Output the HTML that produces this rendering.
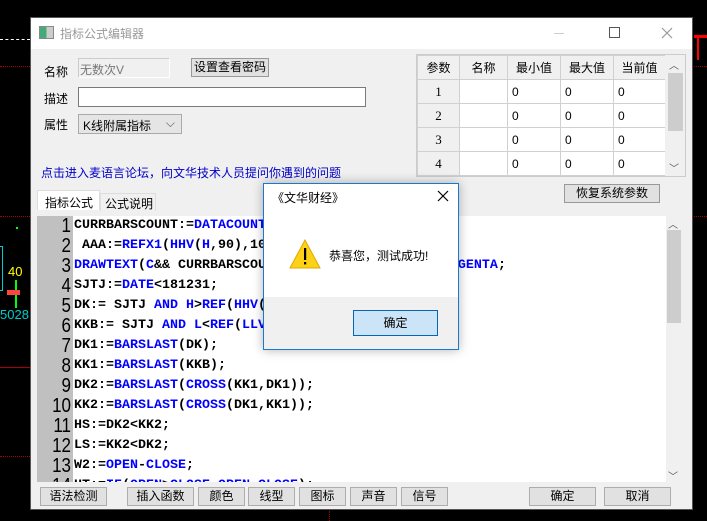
<!DOCTYPE html>
<html><head><meta charset="utf-8"><style>
*{margin:0;padding:0;box-sizing:border-box}
body{width:707px;height:521px;background:#000;position:relative;overflow:hidden;font-family:"Liberation Sans","Noto Sans CJK SC",sans-serif;font-size:12px;color:#000}
.a{position:absolute}
.win{left:30px;top:17px;width:663px;height:493px;background:#f0f0f0;border:1px solid #555}
.title{left:0;top:0;width:661px;height:31px;background:#fff}
.btn{position:absolute;background:#e1e1e1;border:1px solid #adadad;text-align:center;font-size:12px;line-height:17px;white-space:nowrap;overflow:hidden}
.code{left:6px;top:198px;width:629px;height:266px;background:#fff;overflow:hidden}
.gut{left:0;top:0;width:36px;height:266px;background:#c0c0c0}
.ln{position:absolute;left:0;width:34px;text-align:right;font-size:20px;font-family:"Liberation Sans",sans-serif;line-height:20px;transform:scaleX(.85);transform-origin:right}
.cl{position:absolute;left:37px;font-family:"Liberation Mono",monospace;font-weight:bold;font-size:13.33px;line-height:20px;white-space:pre}
.b{color:#0000ff}
table{border-collapse:collapse;font-size:12px;table-layout:fixed;width:248px}
td{border:1px solid #d0d0d0;height:24px;padding-left:4px;background:#fff;overflow:hidden;white-space:nowrap}
.h{background:#f0f0f0;text-align:center;padding:0}
.n{background:#f0f0f0;text-align:center;padding:0;font-family:"Liberation Serif",serif;font-size:13px}
</style></head><body>
<div class="a" style="left:0;top:39px;width:30px;border-top:1px dashed #fff"></div>
<div class="a" style="left:0;top:66px;width:30px;border-top:1px dotted #a00"></div>
<div class="a" style="left:0;top:216px;width:30px;border-top:1px dotted #a00"></div>
<div class="a" style="left:0;top:367px;width:30px;border-top:1px solid #a00"></div>
<div class="a" style="left:0;top:456px;width:30px;border-top:1px dotted #a00"></div>
<div class="a" style="left:16px;top:227px;width:2px;height:2px;background:#0f0"></div>
<div class="a" style="left:0;top:246px;width:3px;height:45px;border:1px solid #0cc;border-left:none"></div>
<div class="a" style="left:8px;top:264px;color:#ff0;font-size:13px">40</div>
<div class="a" style="left:15px;top:280px;width:2px;height:28px;background:#0f0"></div>
<div class="a" style="left:7px;top:290px;width:13px;height:5px;background:#f44"></div>
<div class="a" style="left:0;top:307px;color:#0cc;font-size:13px">5028</div>
<div class="a" style="left:694px;top:35px;width:13px;height:3px;background:#f00"></div>
<div class="a" style="left:697px;top:35px;width:2px;height:25px;background:#f00"></div>
<div class="a" style="left:694px;top:66px;width:13px;border-top:1px dotted #a00"></div>
<div class="a" style="left:694px;top:216px;width:13px;border-top:1px dotted #a00"></div>
<div class="a" style="left:329px;top:511px;height:10px;border-left:1px dotted #a00"></div>

<div class="a win">
 <div class="a title">
  <div class="a" style="left:8px;top:8px;width:15px;height:13px;border:1px solid #888;background:linear-gradient(90deg,#4a7 0 50%,#ccc 50%)"></div>
  <div class="a" style="left:29px;top:7px;font-size:12px;color:#999">指标公式编辑器</div>
  <div class="a" style="left:523px;top:15px;width:10px;border-top:1px solid #ccc"></div>
  <div class="a" style="left:578px;top:9px;width:11px;height:11px;border:1px solid #555"></div>
  <svg class="a" style="left:630px;top:9px" width="12" height="12"><path d="M1 1L11 11M11 1L1 11" stroke="#999" stroke-width="1.2"/></svg>
 </div>
 <div class="a" style="left:13px;top:45px;font-size:12px">名称</div>
 <div class="a" style="left:47px;top:40px;width:92px;height:20px;border:1px solid #ccc;border-right-color:#fff;border-bottom-color:#fff;color:#777;font-size:12px;padding:2px 0 0 1px">无数次V</div>
 <div class="btn" style="left:160px;top:40px;width:78px;height:19px;border-color:#999">设置查看密码</div>
 <div class="a" style="left:13px;top:72px;font-size:12px">描述</div>
 <div class="a" style="left:47px;top:69px;width:288px;height:20px;border:1px solid #7a7a7a;background:#fff"></div>
 <div class="a" style="left:13px;top:98px;font-size:12px">属性</div>
 <div class="a" style="left:47px;top:96px;width:104px;height:20px;border:1px solid #aaa;background:#e5e5e5;font-size:12px;padding:2px 0 0 4px">K线附属指标<span style="position:absolute;right:6px;top:1px;color:#555">⌵</span></div>
 <div class="a" style="left:10px;top:146px;color:#0000c8;font-size:12px">点击进入麦语言论坛，向文华技术人员提问你遇到的问题</div>
 <div class="a" style="left:6px;top:172px;width:63px;height:20px;background:#fff;border:1px solid #ddd;border-bottom:none;font-size:12px;padding:3px 0 0 7px">指标公式</div>
 <div class="a" style="left:69px;top:175px;width:56px;height:18px;border:1px solid #ddd;border-bottom:none;font-size:12px;padding:1px 0 0 4px">公式说明</div>
 <div class="a" style="left:385px;top:36px;width:270px;height:123px;border:1px solid #ccc;background:#fff;overflow:hidden">
  <table style="position:absolute;left:0;top:0">
   <colgroup><col style="width:42px"><col style="width:48px"><col style="width:53px"><col style="width:53px"><col style="width:52px"></colgroup>
   <tr><td class="h">参数</td><td class="h">名称</td><td class="h">最小值</td><td class="h">最大值</td><td class="h">当前值</td></tr>
   <tr><td class="n">1</td><td></td><td>0</td><td>0</td><td>0</td></tr>
   <tr><td class="n">2</td><td></td><td>0</td><td>0</td><td>0</td></tr>
   <tr><td class="n">3</td><td></td><td>0</td><td>0</td><td>0</td></tr>
   <tr><td class="n">4</td><td></td><td>0</td><td>0</td><td>0</td></tr>
   <tr><td class="n"></td><td></td><td></td><td></td><td></td></tr>
  </table>
  <div class="a" style="left:248px;top:0;width:21px;height:122px;background:#f0f0f0"></div>
  <div class="a" style="left:251px;top:18px;width:15px;height:58px;background:#cdcdcd"></div>
  <div class="a" style="left:252px;top:2px;font-size:10px;color:#555">︿</div>
  <div class="a" style="left:252px;top:105px;font-size:10px;color:#555">﹀</div>
 </div>
 <div class="btn" style="left:533px;top:166px;width:96px;height:19px;border-color:#999">恢复系统参数</div>
 <div class="a code">
  <div class="a gut"></div>
  <div class="ln" style="top:0">1</div><div class="cl" style="top:0">CURRBARSCOUNT:=<span class="b">DATACOUNT</span></div>
  <div class="ln" style="top:20px">2</div><div class="cl" style="top:20px"> AAA:=<span class="b">REFX1</span>(<span class="b">HHV</span>(<span class="b">H</span>,90),10</div>
  <div class="ln" style="top:40px">3</div><div class="cl" style="top:40px"><span class="b">DRAWTEXT</span>(<span class="b">C</span>&amp;&amp; CURRBARSCOUNT                     <span class="b">AGENTA</span>;</div>
  <div class="ln" style="top:60px">4</div><div class="cl" style="top:60px">SJTJ:=<span class="b">DATE</span>&lt;181231;</div>
  <div class="ln" style="top:80px">5</div><div class="cl" style="top:80px">DK:= SJTJ <span class="b">AND</span> <span class="b">H</span>&gt;<span class="b">REF</span>(<span class="b">HHV</span>(</div>
  <div class="ln" style="top:100px">6</div><div class="cl" style="top:100px">KKB:= SJTJ <span class="b">AND</span> <span class="b">L</span>&lt;<span class="b">REF</span>(<span class="b">LLV</span></div>
  <div class="ln" style="top:120px">7</div><div class="cl" style="top:120px">DK1:=<span class="b">BARSLAST</span>(DK);</div>
  <div class="ln" style="top:140px">8</div><div class="cl" style="top:140px">KK1:=<span class="b">BARSLAST</span>(KKB);</div>
  <div class="ln" style="top:160px">9</div><div class="cl" style="top:160px">DK2:=<span class="b">BARSLAST</span>(<span class="b">CROSS</span>(KK1,DK1));</div>
  <div class="ln" style="top:180px">10</div><div class="cl" style="top:180px">KK2:=<span class="b">BARSLAST</span>(<span class="b">CROSS</span>(DK1,KK1));</div>
  <div class="ln" style="top:200px">11</div><div class="cl" style="top:200px">HS:=DK2&lt;KK2;</div>
  <div class="ln" style="top:220px">12</div><div class="cl" style="top:220px">LS:=KK2&lt;DK2;</div>
  <div class="ln" style="top:240px">13</div><div class="cl" style="top:240px">W2:=<span class="b">OPEN</span>-<span class="b">CLOSE</span>;</div>
  <div class="ln" style="top:260px">14</div><div class="cl" style="top:260px">HT:=<span class="b">IF</span>(<span class="b">OPEN</span>&gt;<span class="b">CLOSE</span>,<span class="b">OPEN</span>,<span class="b">CLOSE</span>);</div>
 </div>
 <div class="a" style="left:635px;top:198px;width:15px;height:266px;background:#f0f0f0"></div>
 <div class="a" style="left:636px;top:212px;width:14px;height:93px;background:#cdcdcd"></div>
 <div class="a" style="left:637px;top:198px;font-size:10px;color:#555">︿</div>
 <div class="a" style="left:637px;top:450px;font-size:10px;color:#555">﹀</div>
 <div class="btn" style="left:9px;top:469px;width:67px;height:19px">语法检测</div>
 <div class="btn" style="left:96px;top:469px;width:67px;height:19px">插入函数</div>
 <div class="btn" style="left:167px;top:469px;width:47px;height:19px">颜色</div>
 <div class="btn" style="left:217px;top:469px;width:47px;height:19px">线型</div>
 <div class="btn" style="left:268px;top:469px;width:47px;height:19px">图标</div>
 <div class="btn" style="left:319px;top:469px;width:47px;height:19px">声音</div>
 <div class="btn" style="left:370px;top:469px;width:47px;height:19px">信号</div>
 <div class="btn" style="left:498px;top:469px;width:67px;height:19px">确定</div>
 <div class="btn" style="left:573px;top:469px;width:67px;height:19px">取消</div>
</div>

<div class="a" style="left:263px;top:183px;width:196px;height:167px;background:#f0f0f0;border:1px solid #1979ca;box-shadow:0 0 10px rgba(0,0,0,.3)">
 <div class="a" style="left:0;top:0;width:194px;height:113px;background:#fff"></div>
 <div class="a" style="left:8px;top:5px;font-size:12px;color:#000">《文华财经》</div>
 <svg class="a" style="left:173px;top:6px" width="12" height="12"><path d="M1 1L11 11M11 1L1 11" stroke="#000" stroke-width="1.2"/></svg>
 <svg class="a" style="left:25px;top:55px" width="32" height="30" viewBox="0 0 32 30"><polygon points="16,1 31,29 1,29" fill="#fcd116" stroke="#e0a800" stroke-width="1"/><rect x="15" y="9" width="2.2" height="12" fill="#000"/><rect x="15" y="23" width="2.2" height="2.4" fill="#000"/></svg>
 <div class="a" style="left:65px;top:63px;font-size:12px">恭喜您，测试成功!</div>
 <div class="a" style="left:89px;top:126px;width:85px;height:26px;background:#cce4f7;border:1px solid #0566b8;text-align:center;line-height:24px;font-size:12px">确定</div>
</div>
</body></html>
